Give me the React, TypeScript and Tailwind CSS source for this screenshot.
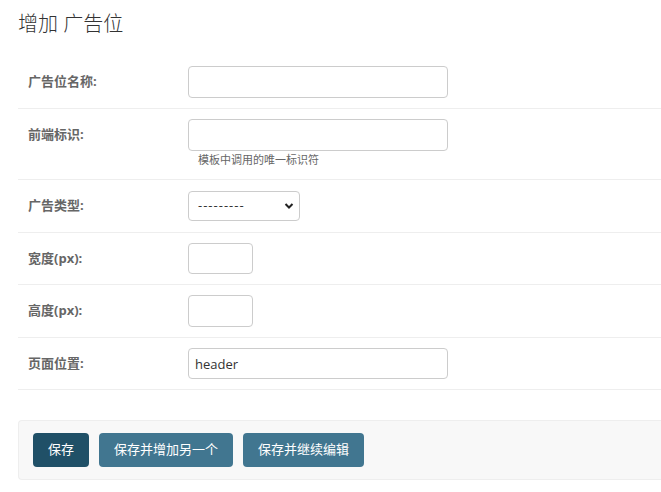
import React from 'react'

const font = { fontFamily: '"Open Sans", "Noto Sans CJK SC", sans-serif' }

interface RowProps {
  label: string
  children: React.ReactNode
  help?: string
}

function FormRow({ label, children, help }: RowProps) {
  return (
    <div className="border-b border-[#eeeeee] p-[10px]">
      <div className="flex items-center">
        <label className="w-[160px] shrink-0 text-[13px] font-bold text-[#666666]">{label}</label>
        {children}
      </div>
      {help && (
        <div className="pl-[170px] text-[11px] leading-[18px] text-[#666666]">{help}</div>
      )}
    </div>
  )
}

const inputCls =
  'rounded-[4px] border border-[#cccccc] bg-white px-[6px] text-[13px] text-[#333333] outline-none'

export default function App() {
  return (
    <div className="min-h-screen w-full overflow-hidden bg-white" style={font}>
      <div className="pl-[18px]">
        {/* Header */}
        <h1 className="pt-[11px] mb-[19px] text-[20px] leading-[26px] font-light text-[#333333]">
          增加 广告位
        </h1>

        {/* Fields */}
        <fieldset>
          <FormRow label="广告位名称:">
            <input className={`${inputCls} h-[32px] w-[260px]`} />
          </FormRow>
          <FormRow label="前端标识:" help="模板中调用的唯一标识符">
            <input className={`${inputCls} h-[32px] w-[260px]`} />
          </FormRow>
          <FormRow label="广告类型:">
            <div className="relative h-[32px] flex items-center">
              <select
                className={`${inputCls} h-[30px] w-[112px] appearance-none pl-[9px] tracking-[1px]`}
                defaultValue=""
              >
                <option value="">---------</option>
              </select>
              <svg
                className="pointer-events-none absolute right-[6px] top-[12px]"
                width="10"
                height="8"
                viewBox="0 0 10 8"
              >
                <path d="M1.5 2l3.5 3.5L8.5 2" fill="none" stroke="#222" strokeWidth="2" />
              </svg>
            </div>
          </FormRow>
          <FormRow label="宽度(px):">
            <input className={`${inputCls} h-[31px] w-[65px]`} />
          </FormRow>
          <FormRow label="高度(px):">
            <input className={`${inputCls} h-[32px] w-[65px]`} />
          </FormRow>
          <FormRow label="页面位置:">
            <input className={`${inputCls} h-[31px] w-[260px]`} defaultValue="header" />
          </FormRow>
        </fieldset>

        {/* Submit row */}
        <div className="mt-[30px] flex gap-[10px] rounded-l-[4px] border border-r-0 border-[#eeeeee] bg-[#f8f8f8] py-[12px] pl-[14px]">
          <button className="h-[34px] rounded-[4px] bg-[#205067] px-[15px] text-[13px] text-white">
            保存
          </button>
          <button className="h-[34px] rounded-[4px] bg-[#417690] px-[15px] text-[13px] text-white">
            保存并增加另一个
          </button>
          <button className="h-[34px] rounded-[4px] bg-[#417690] px-[15px] text-[13px] text-white">
            保存并继续编辑
          </button>
        </div>
      </div>
    </div>
  )
}
